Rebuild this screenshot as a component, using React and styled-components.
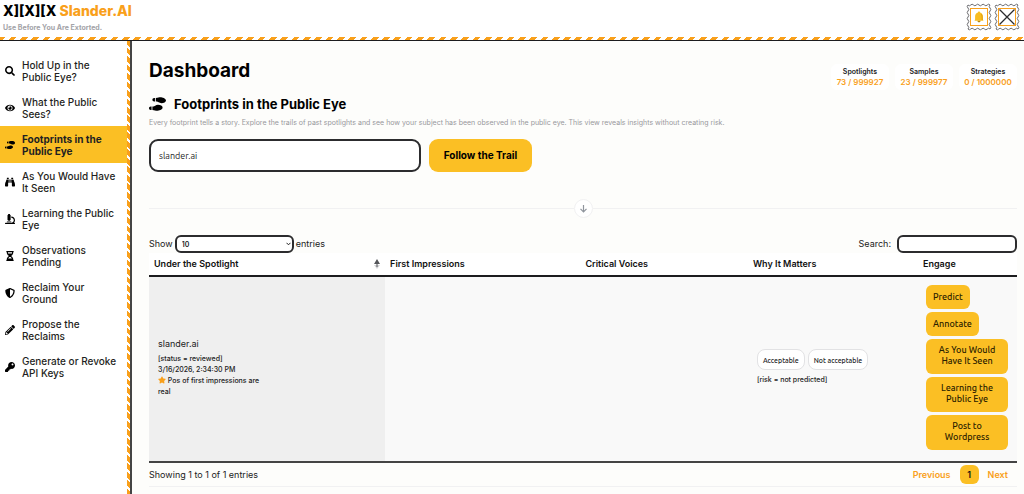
import React from "react";
import styled, { createGlobalStyle, css } from "styled-components";
import {
  FaSearch,
  FaEye,
  FaShoePrints,
  FaBinoculars,
  FaMicroscope,
  FaHourglassHalf,
  FaShieldAlt,
  FaPencilAlt,
  FaKey,
  FaStar,
} from "react-icons/fa";

const amber = "#fbbf24";
const orange = "#f9a01b";
const ink = "#1c1c1e";
const hairline = "#f1f1f2";
const uiFont = `Ubuntu, "Noto Sans", sans-serif`;

const GlobalStyle = createGlobalStyle`
  *, *::before, *::after { box-sizing: border-box; }
  html, body { margin: 0; height: 100%; }
  #root { height: 100%; }
  body {
    background: #fdfdfb;
    color: #222;
    font: 400 9px/12px Inter, "Liberation Sans", sans-serif;
    overflow: hidden;
  }
  h1, h2, p { margin: 0; }
`;

const Page = styled.div`
  display: flex;
  flex-direction: column;
  min-height: 100%;
`;

const Header = styled.header`
  display: flex;
  justify-content: space-between;
  background: #fff;
  height: 37px;
  padding: 3px 4px 0 3px;
`;

const StripeBar = styled.div`
  flex: none;
  height: 4px;
  border-bottom: 1px solid ${ink};
  background: repeating-linear-gradient(135deg, ${orange} 0 4px, #fff 4px 8px);
`;

const Brand = styled.a`
  color: #000;
  text-decoration: none;
  font-weight: 800;
  font-size: 14px;
  line-height: 16px;
  white-space: nowrap;
`;

const BrandAccent = styled.span`
  color: ${orange};
`;

const Tagline = styled.p`
  color: #a3a3a8;
  font-weight: 700;
  font-size: 7px;
  line-height: 10px;
  margin-top: 4px;
`;

const Stamps = styled.div`
  display: flex;
  gap: 2px;
`;

const StampButton = styled.button`
  display: block;
  width: 26px;
  height: 28px;
  padding: 0;
  border: 0;
  background: none;
`;

const Body = styled.div`
  display: flex;
  flex: 1;
`;

const Sidebar = styled.nav`
  flex: none;
  display: flex;
  width: 132px;
  background: #fff;
  border-right: 2px solid #444;
`;

const NavList = styled.div`
  flex: 1;
  padding-top: 11px;
`;

const SideStripe = styled.div`
  width: 3px;
  background: repeating-linear-gradient(45deg, ${orange} 0 4px, #fff 4px 6px);
`;

const NavLink = styled.a`
  display: flex;
  align-items: center;
  gap: 6px;
  height: 37px;
  padding: 0 8px 0 3px;
  color: #1f1f22;
  font-size: 10px;
  line-height: 12px;
  font-weight: ${(p) => (p.$active ? 700 : 500)};
  background: ${(p) => (p.$active ? amber : "transparent")};
  text-decoration: none;
`;

const NavIcon = styled.span`
  flex: none;
  display: flex;
  justify-content: center;
  width: 13px;
  color: #000;
  font-size: 10px;
`;

const Main = styled.main`
  flex: 1;
  min-width: 0;
  padding: 17px 7px 0 17px;
`;

const TopRow = styled.div`
  display: flex;
  justify-content: space-between;
  height: 36px;
`;

const PageTitle = styled.h1`
  color: #000;
  font-size: 19px;
  line-height: 26px;
  font-weight: 700;
`;

const Stats = styled.div`
  display: flex;
  gap: 6px;
  padding-top: 6px;
`;

const StatCard = styled.div`
  width: 58px;
  height: 26px;
  padding-top: 3px;
  border-radius: 6px;
  background: #fff;
  color: ${ink};
  text-align: center;
  white-space: nowrap;
  font-size: 7px;
  line-height: 10px;
  font-weight: 600;
`;

const StatValue = styled.div`
  color: ${orange};
  font-size: 8px;
`;

const SectionTitle = styled.h2`
  display: flex;
  align-items: center;
  gap: 8px;
  color: #000;
  font-size: 13px;
  line-height: 20px;
  font-weight: 700;
  svg { width: 17px; height: 14px; }
`;

const Lead = styled.p`
  margin-top: 4px;
  color: #98989c;
  font-size: 7px;
  line-height: 10px;
`;

const TrailForm = styled.form`
  display: flex;
  gap: 8px;
  margin-top: 11px;
`;

const field = css`
  border: 2px solid #2c2c2e;
  background: #fff;
  color: ${ink};
`;

const TrailInput = styled.input`
  ${field}
  width: 272px;
  height: 33px;
  padding: 0 8px;
  border-radius: 9px;
  font: 400 9px ${uiFont};
`;

const TrailButton = styled.button`
  width: 103px;
  height: 33px;
  padding: 0 0 1px;
  border: 0;
  border-radius: 9px;
  background: ${amber};
  color: #000;
  font: 700 10px Inter, sans-serif;
`;

const Divider = styled.div`
  display: flex;
  align-items: center;
  height: 20px;
  margin: 26px 0 17px;
  &::before, &::after {
    content: "";
    flex: 1;
    height: 1px;
    background: ${hairline};
  }
`;

const DividerKnob = styled.span`
  display: flex;
  align-items: center;
  justify-content: center;
  width: 19px;
  height: 19px;
  border: 1px solid ${hairline};
  border-radius: 50%;
  background: #fff;
`;

const TableTools = styled.div`
  display: flex;
  justify-content: space-between;
  height: 18px;
`;

const ToolLabel = styled.label`
  display: flex;
  align-items: center;
  gap: ${(p) => p.$gap}px;
`;

const SelectWrap = styled.span`
  display: grid;
  align-items: center;
  svg {
    grid-area: 1 / 1;
    justify-self: end;
    margin-right: 3px;
    pointer-events: none;
  }
`;

const LengthSelect = styled.select`
  ${field}
  grid-area: 1 / 1;
  appearance: none;
  width: 119px;
  height: 18px;
  padding: 0 5px;
  border-radius: 6px;
  font: 600 7px Inter, sans-serif;
`;

const SearchInput = styled.input`
  ${field}
  width: 120px;
  height: 18px;
  border-radius: 6px;
`;

const Table = styled.table`
  width: 100%;
  table-layout: fixed;
  border-collapse: separate;
  border-spacing: 0;
  border-bottom: 2px solid #444;
`;

const Col = styled.col`
  width: ${(p) => p.$w}%;
`;

const Th = styled.th`
  height: 24px;
  padding: 0 5px 1px;
  border-bottom: 2px solid ${ink};
  background: #fff;
  color: #111;
  text-align: left;
  font-size: 9px;
  font-weight: 600;
`;

const SortHead = styled.span`
  display: flex;
  align-items: center;
  justify-content: space-between;
`;

const Td = styled.td`
  height: 184px;
  padding: ${(p) => p.$pad || "0 9px 4px"};
  background: ${(p) => (p.$sorted ? "#efefef" : "#f9f9f9")};
  vertical-align: middle;
`;

const Subject = styled.div`
  line-height: 14px;
  margin-bottom: 2px;
`;

const Meta = styled.div`
  width: 112px;
  font-size: 7px;
  font-weight: 500;
  line-height: 11px;
  svg {
    width: 8px;
    height: 8px;
    color: ${orange};
    vertical-align: -1px;
  }
`;

const Verdicts = styled.div`
  display: flex;
  gap: 3px;
  margin-bottom: 4px;
`;

const Verdict = styled.button`
  height: 21px;
  padding: 0 5px;
  border: 1px solid #e2e2e4;
  border-radius: 8px;
  background: #fff;
  color: ${ink};
  white-space: nowrap;
  font: 500 7px ${uiFont};
`;

const Actions = styled.div`
  display: flex;
  flex-direction: column;
  align-items: flex-start;
  gap: 3px;
`;

const ActionButton = styled.button`
  width: ${(p) => (p.$wide ? "82px" : "auto")};
  padding: ${(p) => (p.$wide ? "6px 10px 7px" : "6px 7px")};
  border: 0;
  border-radius: 6px;
  background: ${amber};
  color: #2a2100;
  font: 500 9px/${(p) => (p.$wide ? 11 : 12)}px ${uiFont};
`;

const TableFooter = styled.footer`
  display: flex;
  align-items: center;
  justify-content: space-between;
  height: 24px;
  border-bottom: 1px solid ${hairline};
`;

const Pager = styled.div`
  display: flex;
  align-items: center;
  gap: 9px;
  padding-right: 9px;
`;

const PageButton = styled.button`
  min-width: 19px;
  height: 19px;
  padding: 0;
  border: 0;
  border-radius: 6px;
  background: ${(p) => (p.$current ? amber : "transparent")};
  color: ${(p) => (p.$current ? "#111" : orange)};
  font: 600 9px Inter, sans-serif;
`;

function Stamp({ label, children }) {
  return (
    <StampButton type="button" aria-label={label}>
      <svg width="26" height="28" viewBox="0 0 26 28" fill="none">
        <path
          d="M2 2q1.400 1.600 2.750 0t2.750 0 2.750 0 2.750 0 2.750 0 2.750 0 2.750 0 2.750 0q-1.600 1.500 0 3t0 3 0 3 0 3 0 3 0 3 0 3 0 3q-1.400-1.600-2.750 0t-2.750 0-2.750 0-2.750 0-2.750 0-2.750 0-2.750 0-2.750 0q1.600-1.500 0-3t0-3 0-3 0-3 0-3 0-3 0-3 0-3z"
          fill="#fff"
          stroke="#6b6b6f"
        />
        <rect x="4.500" y="5.500" width="17" height="17" fill="#fff" stroke={orange} />
        {children}
      </svg>
    </StampButton>
  );
}

const navItems = [
  { icon: FaSearch, lines: ["Hold Up in the", "Public Eye?"] },
  { icon: FaEye, lines: ["What the Public", "Sees?"] },
  { icon: FaShoePrints, lines: ["Footprints in the", "Public Eye"], active: true },
  { icon: FaBinoculars, lines: ["As You Would Have", "It Seen"] },
  { icon: FaMicroscope, lines: ["Learning the Public", "Eye"] },
  { icon: FaHourglassHalf, lines: ["Observations", "Pending"] },
  { icon: FaShieldAlt, lines: ["Reclaim Your", "Ground"] },
  { icon: FaPencilAlt, lines: ["Propose the", "Reclaims"] },
  { icon: FaKey, lines: ["Generate or Revoke", "API Keys"] },
];

const stats = [
  ["Spotlights", "73 / 999927"],
  ["Samples", "23 / 999977"],
  ["Strategies", "0 / 1000000"],
];

const Lines = ({ lines }) => (
  <span>
    {lines[0]}
    <br />
    {lines[1]}
  </span>
);

export default function App() {
  return (
    <Page>
      <GlobalStyle />
      <Header>
        <div>
          <Brand href="#">
            X][X][X <BrandAccent>Slander.AI</BrandAccent>
          </Brand>
          <Tagline>Use Before You Are Extorted.</Tagline>
        </div>
        <Stamps>
          <Stamp label="Notifications">
            <path d="M13 8.500c.7 0 1 .4 1 1 1.900.5 2.900 2 2.900 4v3l.6 1.200H8.500l.6-1.200v-3c0-2 1-3.500 2.900-4 0-.6.3-1 1-1z" fill="#f8bd22" />
            <path d="M11.500 17.700h3c0 1-.6 1.600-1.500 1.600s-1.500-.6-1.500-1.600z" fill="#b8860b" />
            <path d="M15 11c1 1 1.200 2 1.200 6" stroke="#dd9a12" />
          </Stamp>
          <Stamp label="Close">
            <path d="M5.500 6.500l15 15M20.500 6.500l-15 15" stroke="#2b2b2e" strokeWidth="1.300" />
          </Stamp>
        </Stamps>
      </Header>
      <StripeBar />
      <Body>
        <Sidebar>
          <NavList>
            {navItems.map(({ icon: Icon, lines, active }) => (
              <NavLink key={lines[0]} href="#" $active={active}>
                <NavIcon>
                  <Icon />
                </NavIcon>
                <Lines lines={lines} />
              </NavLink>
            ))}
          </NavList>
          <SideStripe />
        </Sidebar>
        <Main>
          <TopRow>
            <PageTitle>Dashboard</PageTitle>
            <Stats>
              {stats.map(([name, value]) => (
                <StatCard key={name}>
                  {name}
                  <StatValue>{value}</StatValue>
                </StatCard>
              ))}
            </Stats>
          </TopRow>
          <SectionTitle>
            <FaShoePrints />
            Footprints in the Public Eye
          </SectionTitle>
          <Lead>
            Every footprint tells a story. Explore the trails of past spotlights and see how your
            subject has been observed in the public eye. This view reveals insights without creating
            risk.
          </Lead>
          <TrailForm onSubmit={(e) => e.preventDefault()}>
            <TrailInput aria-label="Subject" defaultValue="slander.ai" />
            <TrailButton type="submit">Follow the Trail</TrailButton>
          </TrailForm>
          <Divider>
            <DividerKnob>
              <svg width="9" height="9" viewBox="0 0 9 9" fill="none" stroke="#8f949c" strokeWidth="1.200">
                <path d="M4.500 1v7M1.500 4.800l3 3 3-3" />
              </svg>
            </DividerKnob>
          </Divider>
          <TableTools>
            <ToolLabel $gap={2}>
              Show
              <SelectWrap>
                <LengthSelect defaultValue="10">
                  <option>10</option>
                  <option>25</option>
                  <option>50</option>
                </LengthSelect>
                <svg width="5" height="4" viewBox="0 0 5 4" fill="none" stroke="#222">
                  <path d="M.5.8l2 2 2-2" />
                </svg>
              </SelectWrap>
              entries
            </ToolLabel>
            <ToolLabel $gap={6}>
              Search:
              <SearchInput type="search" />
            </ToolLabel>
          </TableTools>
          <Table>
            <colgroup>
              <Col $w={27.2} />
              <Col $w={22.5} />
              <Col $w={19.3} />
              <Col $w={19.6} />
              <Col $w={11.4} />
            </colgroup>
            <thead>
              <tr>
                <Th aria-sort="ascending">
                  <SortHead>
                    Under the Spotlight
                    <svg width="6" height="10" viewBox="0 0 6 10">
                      <path d="M3 0l3 5H0z" fill="#55565a" />
                      <path d="M3 10l3-4H0z" fill="#d3d3d6" />
                      <path d="M3 4v4" stroke="#55565a" />
                    </svg>
                  </SortHead>
                </Th>
                <Th>First Impressions</Th>
                <Th>Critical Voices</Th>
                <Th>Why It Matters</Th>
                <Th>Engage</Th>
              </tr>
            </thead>
            <tbody>
              <tr>
                <Td $sorted>
                  <Subject>slander.ai</Subject>
                  <Meta>
                    [status = reviewed]
                    <br />
                    3/16/2026, 2:34:30 PM
                    <br />
                    <FaStar /> Pos of first impressions are real
                  </Meta>
                </Td>
                <Td />
                <Td />
                <Td>
                  <Verdicts>
                    <Verdict type="button">Acceptable</Verdict>
                    <Verdict type="button">Not acceptable</Verdict>
                  </Verdicts>
                  <Meta>[risk = not predicted]</Meta>
                </Td>
                <Td $pad="0 0 4px 8px">
                  <Actions>
                    <ActionButton type="button">Predict</ActionButton>
                    <ActionButton type="button">Annotate</ActionButton>
                    <ActionButton type="button" $wide><Lines lines={["As You Would", "Have It Seen"]} /></ActionButton>
                    <ActionButton type="button" $wide><Lines lines={["Learning the", "Public Eye"]} /></ActionButton>
                    <ActionButton type="button" $wide><Lines lines={["Post to", "Wordpress"]} /></ActionButton>
                  </Actions>
                </Td>
              </tr>
            </tbody>
          </Table>
          <TableFooter>
            <span>Showing 1 to 1 of 1 entries</span>
            <Pager>
              <PageButton type="button">Previous</PageButton>
              <PageButton type="button" $current>1</PageButton>
              <PageButton type="button">Next</PageButton>
            </Pager>
          </TableFooter>
        </Main>
      </Body>
    </Page>
  );
}
